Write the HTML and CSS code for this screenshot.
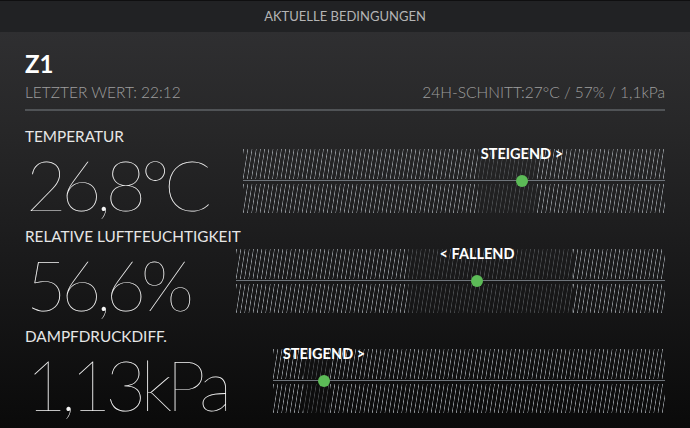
FILE: index.html
```html
<!DOCTYPE html>
<html lang="de">
<head>
<meta charset="utf-8">
<title>Aktuelle Bedingungen</title>
<link rel="stylesheet" href="styles.css">
</head>
<body>
<header class="topbar">AKTUELLE BEDINGUNGEN</header>
<main class="panel">
  <section class="zone">
    <h1 class="zone-name">Z1</h1>
    <div class="zone-meta">
      <span>LETZTER WERT: 22:12</span>
      <span>24H-SCHNITT:27°C / 57% / 1,1kPa</span>
    </div>
  </section>

  <section class="metric metric-temp">
    <div class="metric-label">TEMPERATUR</div>
    <div class="metric-body">
      <div class="metric-value">26,8°C</div>
      <div class="bar">
        <div class="bar-row">
          <div class="seg hatch" style="width:55.7%"></div>
          <div class="seg hatch-dim" style="width:14%"></div>
          <div class="seg hatch seg-rest"></div>
        </div>
        <div class="axis"></div>
        <div class="bar-row">
          <div class="seg hatch" style="width:55.7%"></div>
          <div class="seg hatch-dim" style="width:14%"></div>
          <div class="seg hatch seg-rest"></div>
        </div>
        <span class="dot" style="left:66.1%"></span>
        <span class="trend" style="left:66.1%">STEIGEND &gt;</span>
      </div>
    </div>
  </section>

  <section class="metric metric-hum">
    <div class="metric-label">RELATIVE LUFTFEUCHTIGKEIT</div>
    <div class="metric-body">
      <div class="metric-value">56,6%</div>
      <div class="bar">
        <div class="bar-row">
          <div class="seg hatch" style="width:40.1%"></div>
          <div class="seg hatch-dim" style="width:38.5%"></div>
          <div class="seg hatch seg-rest"></div>
        </div>
        <div class="axis"></div>
        <div class="bar-row">
          <div class="seg hatch" style="width:40.1%"></div>
          <div class="seg hatch-dim" style="width:38.5%"></div>
          <div class="seg hatch seg-rest"></div>
        </div>
        <span class="dot" style="left:56.2%"></span>
        <span class="trend" style="left:56.2%">&lt; FALLEND</span>
      </div>
    </div>
  </section>

  <section class="metric metric-vpd">
    <div class="metric-label">DAMPFDRUCKDIFF.</div>
    <div class="metric-body">
      <div class="metric-value">1,13kPa</div>
      <div class="bar">
        <div class="bar-row">
          <div class="seg hatch" style="width:7.7%"></div>
          <div class="seg hatch-dim" style="width:6.9%"></div>
          <div class="seg hatch seg-rest"></div>
        </div>
        <div class="axis"></div>
        <div class="bar-row">
          <div class="seg hatch" style="width:7.7%"></div>
          <div class="seg hatch-dim" style="width:6.9%"></div>
          <div class="seg hatch seg-rest"></div>
        </div>
        <span class="dot" style="left:13%"></span>
        <span class="trend" style="left:13%">STEIGEND &gt;</span>
      </div>
    </div>
  </section>
</main>
</body>
</html>
```

FILE: styles.css
```css
html, body {
  margin: 0;
  padding: 0;
}
body {
  width: 690px;
  height: 428px;
  overflow: hidden;
  background: #0a0a0a;
  font-family: "Lato", "Liberation Sans", sans-serif;
  color: #ececec;
}
.topbar {
  height: 31px;
  border-top: 1px solid #0f0f10;
  background: #212224;
  color: #b4b4b4;
  font-size: 13px;
  line-height: 31px;
  text-align: center;
}
.panel {
  height: 396px;
  padding: 0 25px;
  box-sizing: border-box;
  background: linear-gradient(to bottom, #2f2f31 0%, #272728 25%, #1b1b1c 55%, #0a0a0a 100%);
  display: flex;
  flex-direction: column;
}
.zone {
  padding-top: 18px;
  border-bottom: 2px solid #505356;
  padding-bottom: 8px;
}
.zone-name {
  margin: 0;
  font-size: 24px;
  line-height: 28px;
  font-weight: 700;
  color: #ffffff;
}
.zone-meta {
  margin-top: 5px;
  display: flex;
  justify-content: space-between;
  font-size: 15.5px;
  line-height: 18px;
  color: #9e9e9e;
  font-weight: 300;
}
.metric {
  display: flex;
  flex-direction: column;
  margin-top: 10px;
}
.metric-temp {
  margin-top: 17px;
}
.metric-label {
  font-size: 15.3px;
  line-height: 16px;
  color: #e6e6e6;
}
.metric-body {
  display: flex;
  align-items: center;
  height: 74px;
}
.metric-value {
  flex: none;
  margin: 6px 0 0 1px;
  font-size: 70px;
  line-height: 72px;
  font-weight: 100;
  color: #f4f4f4;
  white-space: nowrap;
  letter-spacing: -5.5px;
}
.metric-temp .metric-value { width: 217px; }
.metric-hum .metric-value { width: 210px; }
.metric-vpd .metric-value { width: 247px; }
.bar {
  position: relative;
  flex: 1;
  height: 64px;
  display: flex;
  flex-direction: column;
}
.bar-row {
  display: flex;
  height: 30px;
}
.seg {
  flex: none;
  height: 100%;
}
.seg-rest {
  flex: 1;
}
.hatch {
  background: repeating-linear-gradient(99deg,
    rgba(150, 155, 160, 0) 0px,
    rgba(150, 155, 160, 1) 0.65px,
    rgba(150, 155, 160, 0) 1.3px,
    rgba(150, 155, 160, 0) 4.15px);
}
.hatch-dim {
  background: repeating-linear-gradient(99deg,
    rgba(90, 93, 96, 0) 0px,
    rgba(90, 93, 96, 0.8) 0.65px,
    rgba(90, 93, 96, 0) 1.3px,
    rgba(90, 93, 96, 0) 4.15px);
}
.axis {
  height: 1px;
  margin: 1.5px 0 2.5px;
  background: #6f757b;
}
.dot {
  position: absolute;
  top: 26px;
  width: 12px;
  height: 12px;
  margin-left: -6px;
  border-radius: 50%;
  background: #5cbb57;
}
.trend {
  position: absolute;
  top: -3px;
  transform: translateX(-50%);
  white-space: nowrap;
  font-size: 14.5px;
  line-height: 16px;
  font-weight: 700;
  color: #ffffff;
}
```
